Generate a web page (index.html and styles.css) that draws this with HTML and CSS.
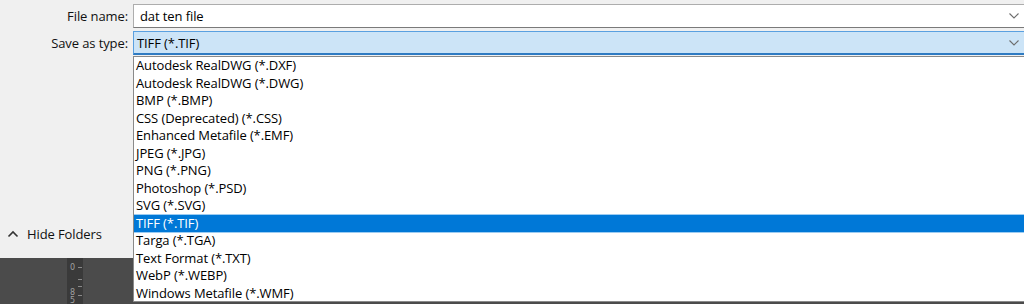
FILE: index.html
```html
<!DOCTYPE html>
<html>
<head>
<meta charset="utf-8">
<link rel="stylesheet" href="styles.css">
</head>
<body>
<div class="screen">
  <div class="dialog">
    <div class="form">
      <div class="row">
        <label class="label">File name:</label>
        <div class="field field-name">
          <span class="value">dat ten file</span>
          <svg class="chev" width="10" height="6" viewBox="0 0 10 6"><path d="M0.5 0.5 L5 5 L9.5 0.5" fill="none" stroke="#6d6d6d" stroke-width="1.1"/></svg>
        </div>
      </div>
      <div class="row">
        <label class="label">Save as type:</label>
        <div class="field field-type">
          <span class="value">TIFF (*.TIF)</span>
          <svg class="chev" width="10" height="6" viewBox="0 0 10 6"><path d="M0.5 0.5 L5 5 L9.5 0.5" fill="none" stroke="#6d6d6d" stroke-width="1.1"/></svg>
        </div>
      </div>
    </div>
    <div class="hide-folders">
      <svg width="12" height="8" viewBox="0 0 12 8"><path d="M1.5 6.5 L6 2 L10.5 6.5" fill="none" stroke="#333" stroke-width="1.6"/></svg>
      <span>Hide Folders</span>
    </div>
  </div>
  <div class="backdrop">
    <div class="ruler">
      <span class="num n0">0</span>
      <span class="tick t0"></span>
      <span class="tick t1"></span>
      <span class="tick t2"></span>
      <span class="tick t3"></span>
      <span class="num n8">8</span>
      <span class="num n5">5</span>
    </div>
  </div>
  <ul class="list">
    <li>Autodesk RealDWG (*.DXF)</li>
    <li>Autodesk RealDWG (*.DWG)</li>
    <li>BMP (*.BMP)</li>
    <li>CSS (Deprecated) (*.CSS)</li>
    <li>Enhanced Metafile (*.EMF)</li>
    <li>JPEG (*.JPG)</li>
    <li>PNG (*.PNG)</li>
    <li>Photoshop (*.PSD)</li>
    <li>SVG (*.SVG)</li>
    <li class="selected">TIFF (*.TIF)</li>
    <li>Targa (*.TGA)</li>
    <li>Text Format (*.TXT)</li>
    <li>WebP (*.WEBP)</li>
    <li>Windows Metafile (*.WMF)</li>
  </ul>
</div>
</body>
</html>
```
FILE: styles.css
```css
html, body {
  margin: 0;
  padding: 0;
}
body {
  width: 1024px;
  height: 304px;
  overflow: hidden;
  font-family: "Open Sans", "Noto Sans", sans-serif;
  font-size: 13px;
  letter-spacing: -0.1px;
  color: #000;
}
.screen {
  position: relative;
  width: 1024px;
  height: 304px;
  display: flex;
  flex-direction: column;
}
.dialog {
  height: 258px;
  background: #f0f0f0;
  display: flex;
  flex-direction: column;
  justify-content: space-between;
  padding-top: 4px;
  box-sizing: border-box;
}
.form {
  display: flex;
  flex-direction: column;
  gap: 3px;
}
.row {
  display: flex;
  align-items: center;
}
.label {
  width: 128px;
  padding-right: 5px;
  text-align: right;
  line-height: 24px;
  color: #111;
}
.field {
  flex: 1;
  height: 24px;
  box-sizing: border-box;
  display: flex;
  align-items: center;
  justify-content: space-between;
  padding: 0 5px 0 6px;
}
.field-name {
  background: #fff;
  border: 1px solid #adadad;
  border-right: none;
  border-bottom-color: #7a7a7a;
}
.field-type {
  background: #cce4f7;
  border: 1px solid #5aa0e0;
  border-right: none;
  border-bottom: 2px solid #2f7bc2;
  padding-left: 3px;
}
.value {
  line-height: 20px;
}
.chev {
  display: block;
}
.hide-folders {
  display: flex;
  align-items: center;
  gap: 8px;
  padding: 0 0 15px 7px;
  color: #111;
}
.hide-folders svg {
  display: block;
}
.backdrop {
  flex: 1;
  background: #4b4b4b;
  position: relative;
}
.ruler {
  position: absolute;
  left: 67px;
  top: 0;
  width: 16px;
  height: 46px;
  background: #3a3a3a;
  font-family: "DejaVu Sans", sans-serif;
  font-size: 8px;
  letter-spacing: 0;
  line-height: 9px;
  color: #a0a0a0;
}
.ruler .num {
  position: absolute;
  left: 3px;
}
.ruler .n0 { top: 5px; }
.ruler .n8 { top: 30px; }
.ruler .n5 { top: 38px; }
.ruler .tick {
  position: absolute;
  left: 11px;
  width: 4px;
  height: 1px;
  background: #8a8a8a;
}
.ruler .t0 { top: 9px; }
.ruler .t1 { top: 21px; }
.ruler .t2 { top: 28px; }
.ruler .t3 { top: 37px; }
.list {
  position: absolute;
  left: 133px;
  top: 56px;
  width: 891px;
  margin: 0;
  padding: 0 0 1px 0;
  list-style: none;
  background: #fff;
  border: 1px solid #8a8a8a;
  border-right: none;
  box-sizing: border-box;
  height: 246px;
}
.list li {
  height: 17.5px;
  line-height: 17.5px;
  padding-left: 2px;
  white-space: nowrap;
}
.list li.selected {
  background: #0078d7;
  color: #fff;
  box-shadow: 0 -1px 0 #9cccf2, 0 1px 0 #9cccf2;
}
```
